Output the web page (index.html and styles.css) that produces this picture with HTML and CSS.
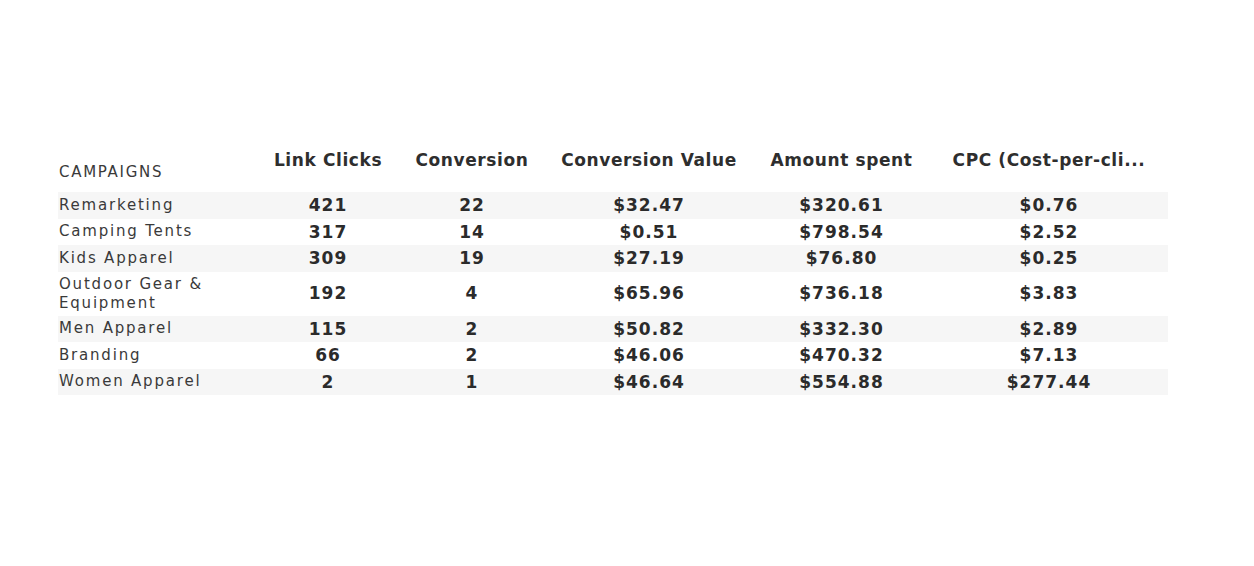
FILE: index.html
```html
<!DOCTYPE html>
<html lang="en">
<head>
<meta charset="utf-8">
<title>Campaigns</title>
<link rel="stylesheet" href="styles.css">
</head>
<body>
<main class="page">
  <table class="report">
    <colgroup>
      <col class="c-name">
      <col class="c-clicks">
      <col class="c-conv">
      <col class="c-value">
      <col class="c-spent">
      <col class="c-cpc">
    </colgroup>
    <thead>
      <tr class="head">
        <th class="h-name">CAMPAIGNS</th>
        <th>Link Clicks</th>
        <th>Conversion</th>
        <th>Conversion Value</th>
        <th>Amount spent</th>
        <th>CPC (Cost-per-cli...</th>
      </tr>
    </thead>
    <tbody>
      <tr><td class="name">Remarketing</td><td>421</td><td>22</td><td>$32.47</td><td>$320.61</td><td>$0.76</td></tr>
      <tr><td class="name">Camping Tents</td><td>317</td><td>14</td><td>$0.51</td><td>$798.54</td><td>$2.52</td></tr>
      <tr><td class="name">Kids Apparel</td><td>309</td><td>19</td><td>$27.19</td><td>$76.80</td><td>$0.25</td></tr>
      <tr><td class="name">Outdoor Gear &amp; Equipment</td><td>192</td><td>4</td><td>$65.96</td><td>$736.18</td><td>$3.83</td></tr>
      <tr><td class="name">Men Apparel</td><td>115</td><td>2</td><td>$50.82</td><td>$332.30</td><td>$2.89</td></tr>
      <tr><td class="name">Branding</td><td>66</td><td>2</td><td>$46.06</td><td>$470.32</td><td>$7.13</td></tr>
      <tr><td class="name">Women Apparel</td><td>2</td><td>1</td><td>$46.64</td><td>$554.88</td><td>$277.44</td></tr>
    </tbody>
  </table>
</main>
</body>
</html>
```

FILE: styles.css
```css
html, body {
  margin: 0;
  padding: 0;
  background: #ffffff;
}

body {
  width: 1254px;
  height: 566px;
  overflow: hidden;
  font-family: "DejaVu Sans", "Liberation Sans", sans-serif;
  color: #2d2d2d;
}

.page {
  padding: 150px 0 0 58px;
}

.report {
  width: 1110px;
  table-layout: fixed;
  border-collapse: collapse;
  border-spacing: 0;
}

.c-name { width: 199px; }
.c-clicks { width: 142px; }
.c-conv { width: 146px; }
.c-value { width: 208px; }
.c-spent { width: 177px; }
.c-cpc { width: 238px; }

.head {
  height: 42px;
}

.head th {
  padding: 0 16px 10px;
  font-size: 17px;
  line-height: 20px;
  font-weight: bold;
  letter-spacing: 0.6px;
  color: #2e2e2e;
  text-align: center;
  vertical-align: top;
  white-space: nowrap;
}

.head th.h-name {
  padding-left: 1px;
  text-align: left;
  vertical-align: bottom;
  font-size: 15px;
  line-height: 19px;
  font-weight: normal;
  letter-spacing: 1.7px;
  color: #3a3a3a;
}

.report tbody tr:nth-child(odd) {
  background: #f6f6f6;
}

.report td {
  padding: 3px 16px;
  font-size: 17px;
  line-height: 20.5px;
  font-weight: bold;
  letter-spacing: 1px;
  color: #2b2b2b;
  text-align: center;
  vertical-align: middle;
}

.report td.name {
  padding-left: 1px;
  text-align: left;
  font-size: 15px;
  line-height: 19px;
  font-weight: normal;
  letter-spacing: 1.8px;
  color: #3a3a3a;
}
```
